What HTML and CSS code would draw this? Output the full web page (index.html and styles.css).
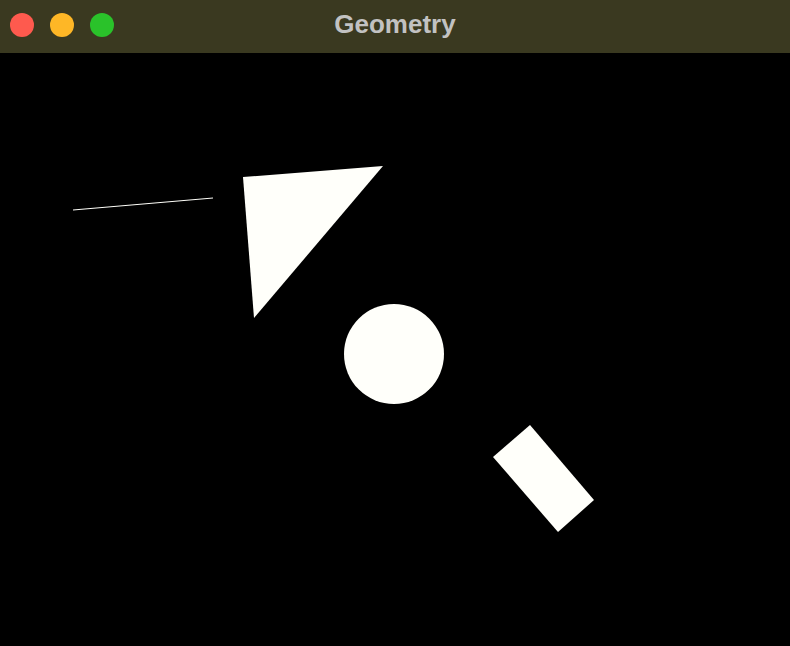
FILE: index.html
```html
<!DOCTYPE html>
<html>
<head>
<meta charset="utf-8">
<title>Geometry</title>
<link rel="stylesheet" href="styles.css">
</head>
<body>
<div class="window">
  <header class="titlebar">
    <div class="lights">
      <span class="light red"></span>
      <span class="light yellow"></span>
      <span class="light green"></span>
    </div>
    <div class="title">Geometry</div>
  </header>
  <main class="canvas">
    <svg class="scene" viewBox="0 53 790 593" width="790" height="593" xmlns="http://www.w3.org/2000/svg">
      <line x1="73" y1="210" x2="213" y2="198" stroke="#fffffa" stroke-width="1"/>
      <polygon points="243,177 383,166 254,318" fill="#fffffa"/>
      <circle cx="394" cy="354" r="50" fill="#fffffa"/>
      <polygon points="530,425 594,500 558,532 493,457" fill="#fffffa"/>
    </svg>
  </main>
</div>
</body>
</html>
```

FILE: styles.css
```css
html, body {
  margin: 0;
  padding: 0;
  background: #000;
  overflow: hidden;
}
.window {
  width: 790px;
  height: 646px;
  display: flex;
  flex-direction: column;
  background: #000;
}
.titlebar {
  height: 53px;
  flex: 0 0 53px;
  background: #3a3920;
  position: relative;
  display: flex;
  align-items: center;
  justify-content: center;
}
.lights {
  position: absolute;
  left: 10px;
  top: 13px;
  display: flex;
  gap: 16px;
}
.light {
  width: 24px;
  height: 24px;
  border-radius: 50%;
  display: block;
}
.red { background: #fe5a4e; }
.yellow { background: #feb726; }
.green { background: #2ac22a; }
.title {
  font-family: "Liberation Sans", Arial, sans-serif;
  font-weight: bold;
  font-size: 26px;
  color: #c2c2c2;
  margin-top: -4px;
}
.canvas {
  flex: 1;
  background: #000;
}
.scene {
  display: block;
}
```
